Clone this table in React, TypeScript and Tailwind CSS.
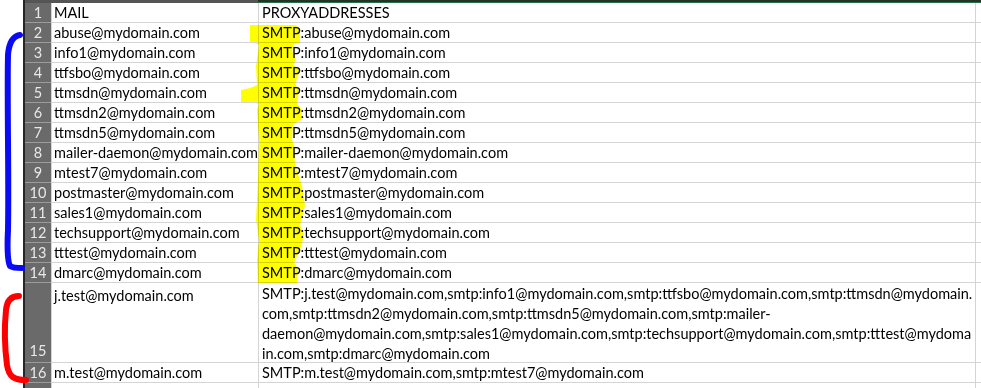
import React from "react";

const rows: [string, string][] = [
    ["MAIL", "PROXYADDRESSES"],
    ["abuse@mydomain.com", "SMTP:abuse@mydomain.com"],
    ["info1@mydomain.com", "SMTP:info1@mydomain.com"],
    ["ttfsbo@mydomain.com", "SMTP:ttfsbo@mydomain.com"],
    ["ttmsdn@mydomain.com", "SMTP:ttmsdn@mydomain.com"],
    ["ttmsdn2@mydomain.com", "SMTP:ttmsdn2@mydomain.com"],
    ["ttmsdn5@mydomain.com", "SMTP:ttmsdn5@mydomain.com"],
    ["mailer-daemon@mydomain.com", "SMTP:mailer-daemon@mydomain.com"],
    ["mtest7@mydomain.com", "SMTP:mtest7@mydomain.com"],
    ["postmaster@mydomain.com", "SMTP:postmaster@mydomain.com"],
    ["sales1@mydomain.com", "SMTP:sales1@mydomain.com"],
    ["techsupport@mydomain.com", "SMTP:techsupport@mydomain.com"],
    ["tttest@mydomain.com", "SMTP:tttest@mydomain.com"],
    ["dmarc@mydomain.com", "SMTP:dmarc@mydomain.com"],
];

const wrapped = [
    "SMTP:j.test@mydomain.com,smtp:info1@mydomain.com,smtp:ttfsbo@mydomain.com,smtp:ttmsdn@mydomain.",
    "com,smtp:ttmsdn2@mydomain.com,smtp:ttmsdn5@mydomain.com,smtp:mailer-",
    "daemon@mydomain.com,smtp:sales1@mydomain.com,smtp:techsupport@mydomain.com,smtp:tttest@mydoma",
    "in.com,smtp:dmarc@mydomain.com",
];

/* one normal 20px row */
function Row({ num, a, b }: { num: number | string; a: string; b: string }) {
    return (
        <div className="flex h-[20px] shrink-0">
            <div className="w-[26px] shrink-0 bg-[#6a6a6a] border-b border-[#9c9c9c] text-[#e8e8e8] flex items-center justify-center pt-[1px]">
                {num}
            </div>
            <div className="w-[207px] shrink-0 border-b border-l border-[#d4d4d4] pl-[2px] pt-[1px] flex items-center whitespace-nowrap overflow-visible relative z-[1]">
                {a}
            </div>
            <div className="w-[717px] shrink-0 border-b border-l border-[#d4d4d4] pl-[3px] pt-[1px] flex items-center whitespace-nowrap bg-white">
                {b}
            </div>
            <div className="flex-1 border-b border-l border-[#d4d4d4]" />
        </div>
    );
}

export default function App() {
    return (
        <div className="relative w-[981px] h-[388px] overflow-hidden bg-white text-[14.5px] text-black font-[family-name:Lato,sans-serif] leading-none">
            <div className="flex h-full">
                {/* white gutter left of the sheet */}
                <div className="w-[23px] shrink-0 bg-white" />
                <div className="w-[2px] shrink-0 bg-[#262626]" />

                <div className="flex-1 flex flex-col">
                    {/* top edge */}
                    <div className="flex h-[3px] shrink-0">
                        <div className="w-[233px] bg-[#555555]" />
                        <div className="flex-1 flex flex-col">
                            <div className="h-[2px] bg-[#27302b]" />
                            <div className="h-[1px] bg-[#217346]" />
                        </div>
                    </div>

                    {rows.map((r, i) => (
                        <Row key={i} num={i + 1} a={r[0]} b={r[1]} />
                    ))}

                    {/* row 15, wrapped text */}
                    <div className="flex h-[80px] shrink-0">
                        <div className="w-[26px] shrink-0 bg-[#6a6a6a] border-b border-[#9c9c9c] text-[#e8e8e8] flex items-end justify-center pb-[4px]">
                            15
                        </div>
                        <div className="w-[207px] shrink-0 border-b border-l border-[#d4d4d4] pl-[2px] pt-[6px] whitespace-nowrap">
                            j.test@mydomain.com
                        </div>
                        <div className="w-[717px] shrink-0 border-b border-l border-[#d4d4d4] pl-[3px] pt-[1px] flex flex-col">
                            {wrapped.map((line, i) => (
                                <div key={i} className="h-[20px] shrink-0 flex items-center whitespace-nowrap">
                                    {line}
                                </div>
                            ))}
                        </div>
                        <div className="flex-1 border-b border-l border-[#d4d4d4]" />
                    </div>

                    <Row num={16} a="m.test@mydomain.com" b="SMTP:m.test@mydomain.com,smtp:mtest7@mydomain.com" />
                    <Row num="" a="" b="" />
                </div>
            </div>

            {/* hand-drawn marks on top */}
            <svg className="absolute inset-0 pointer-events-none mix-blend-multiply" width="981" height="388">
                <path
                    d="M250 25 L296 25 L300 30 L300 43 L294 44 L292 50 L296 60 L293 65 L300 70 L295 84 L299 90 L297 104 L302 110 L301 120 L293 124 L292 140 L294 145 L295 165 L302 186 L305 205 L300 225 L304 235 L300 250 L294 262 L298 270 L297 283 L258 283 L257 260 L259 240 L256 220 L258 180 L259 140 L257 110 L259 104 L255 103 L241 102 L241 90 L250 88 L257 85 L256 66 L259 45 L255 43 L250 42 Z"
                    fill="#ffff00"
                />
            </svg>
            <svg className="absolute inset-0 pointer-events-none" width="981" height="388">
                <path
                    d="M20 35 C14 36 9 42 8 55 C7 100 9 180 8 230 C7 250 8 262 10 266 C13 268 18 268 22 268"
                    stroke="#0a0af5"
                    strokeWidth="6"
                    fill="none"
                    strokeLinecap="round"
                />
                <path
                    d="M19 296 C13 296 7 299 6 310 C4 330 5 350 7 365 C9 377 14 380 26 380"
                    stroke="#ff0000"
                    strokeWidth="6"
                    fill="none"
                    strokeLinecap="round"
                />
            </svg>
        </div>
    );
}
